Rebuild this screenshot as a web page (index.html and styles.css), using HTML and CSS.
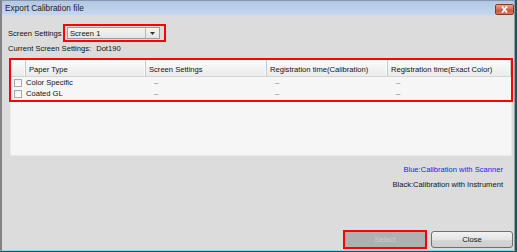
FILE: index.html
```html
<!DOCTYPE html>
<html>
<head>
<meta charset="utf-8">
<link rel="stylesheet" href="styles.css">
</head>
<body>
<div class="frame">
  <div class="window">
    <div class="titlebar">
      <span class="title">Export Calibration file</span>
      <span class="close-x">
        <svg width="11" height="7" viewBox="0 0 11 7"><path d="M3 0.5 L8 6.5 M8 0.5 L3 6.5" stroke="#fff" stroke-width="1.8" fill="none"/></svg>
      </span>
    </div>
    <div class="body">
      <div class="setting-row">
        <span class="lbl">Screen Settings</span>
        <div class="hl hl-combo">
          <div class="combo">
            <span class="combo-text">Screen 1</span>
            <span class="drop"><svg width="5" height="3" viewBox="0 0 5 3"><path d="M0 0 H5 L2.5 3 Z" fill="#333"/></svg></span>
          </div>
        </div>
      </div>
      <div class="current"><span>Current Screen Settings:</span><span class="cur-val">Dot190</span></div>
      <div class="panel">
        <div class="hl hl-table">
          <div class="grid thead">
            <div class="th"></div>
            <div class="th">Paper Type</div>
            <div class="th">Screen Settings</div>
            <div class="th">Registration time(Calibration)</div>
            <div class="th">Registration time(Exact Color)</div>
          </div>
          <div class="grid tr">
            <div class="td chk"><span class="box"></span></div>
            <div class="td name">Color Specific</div>
            <div class="td dash">–</div>
            <div class="td dash">–</div>
            <div class="td dash">–</div>
          </div>
          <div class="grid tr">
            <div class="td chk"><span class="box"></span></div>
            <div class="td name">Coated GL</div>
            <div class="td dash">–</div>
            <div class="td dash">–</div>
            <div class="td dash">–</div>
          </div>
        </div>
      </div>
      <div class="legend">
        <div class="blue">Blue:Calibration with Scanner</div>
        <div>Black:Calibration with Instrument</div>
      </div>
      <div class="buttons">
        <div class="hl hl-btn"><div class="btn disabled">Select</div></div>
        <div class="btn">Close</div>
      </div>
    </div>
  </div>
</div>
</body>
</html>
```
FILE: styles.css
```css
html, body {
  margin: 0;
  padding: 0;
}
body {
  font-family: "Liberation Sans", Arial, sans-serif;
  font-size: 7.6px;
  color: #111;
}
.frame {
  width: 517px;
  height: 252px;
  background: #1c565b;
  box-sizing: border-box;
  padding-right: 2px;
  padding-bottom: 1px;
}
.window {
  width: 515px;
  height: 251px;
  box-sizing: border-box;
  border-left: 2px solid #828282;
  border-right: 1px solid #9a9a9a;
  border-top: 1px solid #8796aa;
  border-bottom: 1px solid #8ad6ee;
  background: #dcdcdc;
  display: flex;
  flex-direction: column;
}
.titlebar {
  height: 15px;
  flex: none;
  display: flex;
  align-items: center;
  background: linear-gradient(#b2c8e4, #c6d7ee);
  border-bottom: 1px solid #d0dcea;
  box-sizing: border-box;
}
.title {
  font-size: 8.3px;
  padding-left: 3px;
  color: #1a1a1a;
}
.close-x {
  margin-left: auto;
  width: 19px;
  height: 11px;
  margin-top: 2px;
  box-sizing: border-box;
  border: 1px solid #8c3a2a;
  border-radius: 2px;
  background: linear-gradient(#e6a494, #cf6a52 50%, #c2513a 51%, #d77a5f);
  display: flex;
  align-items: center;
  justify-content: center;
}
.body {
  flex: 1;
  display: flex;
  flex-direction: column;
  padding: 0 1px 1px 6px;
}
.hl {
  border: 2px solid #ff0000;
}
.setting-row {
  display: flex;
  align-items: center;
  margin-top: 8px;
  height: 18px;
}
.lbl {
  width: 55px;
}
.hl-combo {
  width: 97px;
  height: 12px;
  padding: 1px 0 1px 2px;
  display: flex;
  align-items: center;
}
.combo {
  width: 93px;
  height: 12px;
  box-sizing: border-box;
  border: 1px solid #9c9c9c;
  background: linear-gradient(#f4f4f4, #e4e4e4);
  display: flex;
  align-items: center;
}
.combo-text {
  padding-left: 2px;
}
.drop {
  margin-left: auto;
  width: 13px;
  height: 10px;
  border-left: 1px solid #b8b8b8;
  display: flex;
  align-items: center;
  justify-content: center;
}
.current {
  height: 10px;
  margin-top: 1px;
  display: flex;
  align-items: center;
}
.cur-val {
  margin-left: 5px;
}
.panel {
  margin-top: 7px;
  margin-left: 3px;
  width: 500px;
  height: 95px;
  background: #f6f6f6;
  box-shadow: 0 0 0 1px #e9e9e9;
}
.hl-table {
  margin: -2px -2px 0;
  padding-bottom: 1px;
}
.grid {
  display: grid;
  grid-template-columns: 15px 120px 121px 121px 1fr;
}
.thead {
  height: 17px;
  background: linear-gradient(#fbfbfb, #ebebeb);
  border-bottom: 1px solid #d4d4d4;
  box-sizing: border-box;
}
.th {
  border-right: 1px solid #c9c9c9;
  box-shadow: inset -1px 0 0 #fafafa;
  display: flex;
  align-items: center;
  padding-left: 3px;
  padding-top: 2px;
}
.tr {
  height: 11px;
}
.td {
  display: flex;
  align-items: center;
}
.chk {
  padding-left: 3px;
}
.box {
  width: 8px;
  height: 8px;
  border: 1px solid #a8a8a8;
  background: linear-gradient(#f0f0f0, #ffffff);
  box-sizing: border-box;
}
.dash {
  padding-left: 8px;
  color: #777;
}
.legend {
  margin-top: 7px;
  text-align: right;
  padding-right: 10px;
  line-height: 15px;
}
.blue {
  color: #2020ff;
}
.buttons {
  margin-top: auto;
  display: flex;
  justify-content: flex-end;
  align-items: center;
  gap: 4px;
}
.hl-btn {
  width: 80px;
  height: 15px;
}
.btn {
  width: 82px;
  height: 17px;
  box-sizing: border-box;
  border: 1px solid #707070;
  border-radius: 3px;
  background: linear-gradient(#f2f2f2, #e4e4e4 50%, #d6d6d6 51%, #cfcfcf);
  display: flex;
  align-items: center;
  justify-content: center;
}
.btn.disabled {
  width: 80px;
  height: 15px;
  border: none;
  border-radius: 0;
  background: #b0b0b0;
  color: #cccccc;
}
```
